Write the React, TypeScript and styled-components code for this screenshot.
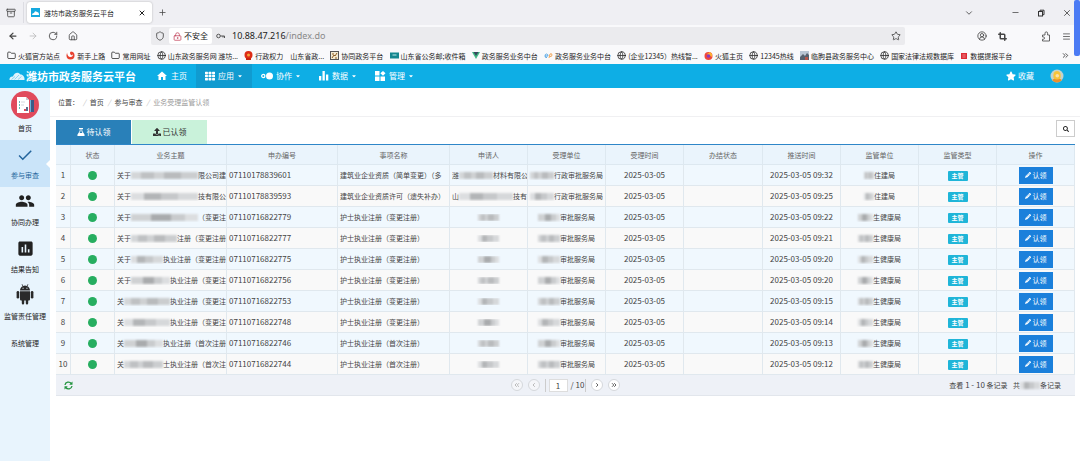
import React from 'react';
import styled, { createGlobalStyle, css } from 'styled-components';
import {
  ArrowLeft, ArrowRight, RotateCw, House, Shield, LockKeyhole, Star, CircleUserRound,
  Crop, Menu, ChevronDown, ChevronsRight, Minus, X, Plus, Globe, Folder, Archive,
} from 'lucide-react';
import { FaTh, FaStar, FaUpload, FaSearch, FaPencilAlt, FaCaretDown } from 'react-icons/fa';
import { MdGroup, MdAssessment, MdCheck, MdHome } from 'react-icons/md';

const Global = createGlobalStyle`
  * { box-sizing: border-box; }
  html, body { margin: 0; }
  body {
    font: 7px/10px "Noto Sans CJK SC", "Noto Sans", sans-serif;
    color: #444;
    background: #fff;
  }
  button, input { font: inherit; color: inherit; margin: 0; padding: 0; }
  button { border: 0; background: none; display: inline-flex; align-items: center; justify-content: center; }
  a { color: inherit; text-decoration: none; }
  svg { display: block; flex: none; }
`;

const Page = styled.div`
  position: relative;
  display: flex;
  flex-direction: column;
  min-height: 100vh;
`;

/* Browser frame */
const TabStrip = styled.div`
  display: flex;
  align-items: center;
  height: 25px;
  padding: 0 8px 0 6px;
  background: #efeff3;
  color: #444;
`;
const Divider = styled.span`
  width: 1px;
  height: 21px;
  margin: 0 3px 0 7px;
  background: #dcdce2;
`;
const BrowserTab = styled.div`
  display: flex;
  align-items: center;
  gap: 4px;
  width: 125px;
  height: 21px;
  padding: 0 6px 0 4px;
  border-radius: 3px;
  background: #fff;
  box-shadow: 0 0 2px #aaa;
  color: #222;
  button { margin-left: auto; }
`;
const NewTab = styled.button`
  margin-left: 6px;
`;
const WindowButtons = styled.div`
  display: flex;
  align-items: center;
  margin-left: auto;
  gap: 17px;
  button:first-child { margin-right: 20px; }
`;
const AddressRow = styled.div`
  display: flex;
  align-items: center;
  height: 22px;
  padding: 0 9px 0 8px;
  gap: 10px;
  background: #f9f9fb;
  color: #444;
`;
const AddressField = styled.div`
  display: flex;
  align-items: center;
  gap: 4px;
  flex: 1;
  height: 18px;
  margin: 0 62px 0 63px;
  padding: 0 4px;
  border-radius: 2px;
  background: #ebebee;
`;
const Insecure = styled.span`
  display: flex;
  align-items: center;
  gap: 2px;
  height: 16px;
  padding: 0 4px;
  border-radius: 2px;
  background: #fff;
  font-size: 8px;
  color: #222;
`;
const Address = styled.input`
  flex: 1;
  min-width: 0;
  border: 0;
  background: transparent;
`;
const AddressText = styled.label`
  display: flex;
  flex: 1;
  margin-left: 3px;
  font: 9px/12px "Noto Sans", sans-serif;
  color: #222;
  span { color: #888; }
`;
const AddressTools = styled.div`
  display: flex;
  align-items: center;
  gap: 11px;
  button:nth-child(3) { margin-left: 23px; }
`;
const Bookmarks = styled.nav`
  display: flex;
  align-items: center;
  justify-content: space-between;
  height: 17px;
  padding: 0 10px 0 7px;
  background: #f9f9fb;
  color: #222;
  white-space: nowrap;
`;
const Bookmark = styled.a`
  display: flex;
  align-items: center;
  gap: 2px;
`;
const BookmarkSpace = styled.span`
  width: 36px;
`;
const ScrollThumb = styled.div`
  position: absolute;
  top: 0;
  right: 0;
  width: 6px;
  height: 56px;
  border-radius: 2px;
  background: #4b7bf4;
`;

/* Application header */
const Header = styled.header`
  display: flex;
  align-items: stretch;
  height: 24px;
  padding: 0 16px 0 9px;
  background: #0eaee5;
  color: #fff;
`;
const Brand = styled.h1`
  display: flex;
  align-items: center;
  gap: 1px;
  width: 138px;
  margin: 0;
  font-size: 11px;
  font-weight: 700;
  line-height: 16px;
  white-space: nowrap;
`;
const NavButton = styled.button<{ $active?: boolean }>`
  gap: 3px;
  padding: 0 9px;
  font-size: 8px;
  background: ${(p) => (p.$active ? '#109bd0' : 'transparent')};
`;
const HeaderRight = styled.div`
  display: flex;
  align-items: center;
  gap: 16px;
  margin-left: auto;
  button { gap: 2px; font-size: 8px; }
`;

/* Body */
const Body = styled.div`
  display: flex;
  flex: 1;
`;
const Sidebar = styled.nav`
  flex: none;
  width: 50px;
  background: #e8f4fd;
  color: #222;
`;
const SideItem = styled.a<{ $active?: boolean; $plain?: boolean }>`
  position: relative;
  display: flex;
  flex-direction: column;
  align-items: center;
  justify-content: flex-end;
  gap: 6px;
  height: 47px;
  padding-bottom: 7px;
  white-space: nowrap;
  ${(p) => p.$plain && css`height: 27px;`}
  ${(p) => p.$active && css`
    background: #cae4f9;
    color: #23649c;
    &::after {
      content: '';
      position: absolute;
      top: 20px;
      right: 0;
      border: 4px solid transparent;
      border-left: 0;
      border-right-color: #fff;
    }
  `}
`;
const SideHome = styled(SideItem)`
  height: 52px;
  gap: 4px;
`;
const Main = styled.main`
  flex: 1;
  min-width: 0;
`;
const Crumbs = styled.div`
  display: flex;
  align-items: center;
  gap: 4px;
  height: 28px;
  padding-left: 8px;
  i { color: #bbb; }
  span { color: #999; }
`;
const Content = styled.section`
  padding: 3px 5px 0 6px;
  border-top: 1px solid #f0f0f2;
`;
const TabRow = styled.div`
  display: flex;
  align-items: flex-start;
  gap: 1px;
`;
const ListTab = styled.button<{ $active?: boolean }>`
  width: 75px;
  height: 24px;
  gap: 2px;
  font-size: 8px;
  background: ${(p) => (p.$active ? '#2980b9' : '#c9f2da')};
  color: ${(p) => (p.$active ? '#fff' : '#333')};
`;
const SearchButton = styled.button`
  width: 19px;
  height: 17px;
  margin-left: auto;
  border: 1px solid #ccc;
  color: #222;
`;

const Grid = styled.table`
  width: 100%;
  table-layout: fixed;
  border-collapse: separate;
  border-spacing: 0;
  border-top: 1px solid #2e86c8;
  white-space: nowrap;
  text-align: center;
  tbody tr:nth-child(odd) { background: #f0f8fe; }
  tbody tr:nth-child(even) { background: #f9f9f9; }
`;
const Th = styled.th`
  height: 20px;
  padding: 0;
  background: #eaf4fc;
  border: solid #dde8f0;
  border-width: 0 1px 1px 0;
  font-weight: 400;
  color: #666;
`;
const Td = styled.td<{ $left?: boolean; $num?: boolean }>`
  height: 21px;
  padding: 0 0 0 ${(p) => (p.$left ? 2 : 0)}px;
  border: solid #e0e8ee;
  border-width: 0 1px 1px 0;
  overflow: hidden;
  text-align: ${(p) => (p.$left ? 'left' : 'center')};
  font-size: ${(p) => (p.$num ? 8 : 7)}px;
`;
const Line = styled.div<{ $center?: boolean }>`
  display: flex;
  align-items: center;
  justify-content: ${(p) => (p.$center ? 'center' : 'flex-start')};
  overflow: hidden;
`;
const tones = [
  'linear-gradient(90deg,#d4d6d8 0 15%,#bfc1c3 15% 35%,#cfd1d3 35% 50%,#b9bbbd 50% 75%,#cbcdcf 75%)',
  'linear-gradient(90deg,#dcdee0 0 20%,#b3b5b7 20% 45%,#c6c8ca 45% 70%,#d6d8da 70%)',
  'linear-gradient(90deg,#cfd1d3 0 30%,#a9abad 30% 60%,#c9cbcd 60% 80%,#dcdee0 80%)',
];
const Mosaic = styled.span<{ $w?: number; $tone?: number }>`
  flex: ${(p) => (p.$w ? 'none' : '1')};
  width: ${(p) => (p.$w ? `${p.$w}px` : 'auto')};
  height: 7px;
  background: ${(p) => tones[(p.$tone ?? 0) % 3]};
  filter: blur(1px);
`;
const Dot = styled.span`
  display: inline-block;
  width: 9px;
  height: 9px;
  border-radius: 50%;
  background: #27ae60;
  vertical-align: middle;
`;
const Badge = styled.span`
  display: inline-block;
  width: 20px;
  border-radius: 1px;
  background: #1fb5d8;
  color: #fff;
  font-size: 6px;
  font-weight: 700;
  vertical-align: middle;
`;
const ClaimButton = styled.button`
  gap: 2px;
  width: 34px;
  height: 17px;
  background: #1b80db;
  color: #fff;
  vertical-align: middle;
`;
const Pager = styled.footer`
  display: grid;
  grid-template-columns: 1fr auto 1fr;
  align-items: center;
  height: 21px;
  background: #eef1f7;
  border-bottom: 1px solid #e2e6ec;
`;
const ReloadButton = styled.button`
  justify-self: start;
  padding-left: 8px;
`;
const Pages = styled.div`
  display: flex;
  align-items: center;
  gap: 5px;
  font-size: 8px;
`;
const Round = styled.button`
  width: 12px;
  height: 12px;
  border: 1px solid #d5d8dc;
  border-radius: 50%;
  background: #fff;
  color: #666;
  &:disabled { color: #bbb; background: #f5f6f9; }
`;
const PageInput = styled.label`
  display: flex;
  align-items: center;
  gap: 3px;
  padding: 0 1px 0 3px;
  border: solid #ccc;
  border-width: 0 1px;
  input { width: 19px; height: 13px; border: 1px solid #ddd; background: #fff; text-align: center; }
`;
const Records = styled.div`
  display: flex;
  align-items: center;
  justify-content: flex-end;
  padding-right: 14px;
  white-space: pre;
`;
const Range = styled.span`
  font-size: 8px;
`;

const CloudLogo = ({ w = 16 }: { w?: number }) => (
  <svg width={w} height={w * 0.625} viewBox="0 0 16 10">
    <path d="M.5 9C0 7 2 5 4 5.500C5 2 9 0 11.500 3.500C14 3.500 16 6 15.500 9Z" fill="#dff3fc" />
    <path d="M2.500 8.500L6 5.500M5.500 8.500L10 4M9 8.500L12.500 5.500" stroke="#8fd3ef" fill="none" />
  </svg>
);
const Square = ({ fill, children }: { fill: string; children?: React.ReactNode }) => (
  <svg width="9" height="9" viewBox="0 0 9 9"><rect width="9" height="9" fill={fill} />{children}</svg>
);
const RestoreIcon = () => (
  <svg width="8" height="8" viewBox="0 0 8 8" fill="none" stroke="#333">
    <rect x="1.500" y="2.500" width="4" height="4.500" /><path d="M3 2.500V1.200h4v4.500H5.500" />
  </svg>
);
const KeyIcon = () => (
  <svg width="9" height="8" viewBox="0 0 9 8" fill="none" stroke="#555">
    <circle cx="2.500" cy="4" r="1.800" /><path d="M4.300 4H8.500V6M7 4V5.500" />
  </svg>
);
const PuzzleIcon = () => (
  <svg width="10" height="11" viewBox="0 0 10 11" fill="none" stroke="#555" strokeWidth=".9" strokeLinejoin="round">
    <path d="M1.500 4H4V2.200a1.200 1.200 0 0 1 2.600 0V4H8.500V10H1.500V8.300H2.300a1.200 1.200 0 0 0 0-2.400H1.500Z" />
  </svg>
);
const FlaskIcon = () => (
  <svg width="8" height="8" viewBox="0 0 8 8" fill="#fff">
    <path d="M2 0H6V1H5.300V3L7.600 6.800Q8 8 7 8H1Q0 8 .4 6.800L2.700 3V1H2ZM3.500 1V3.200L2.500 5H5.500L4.500 3.200V1Z" fillRule="evenodd" />
  </svg>
);
const SwirlIcon = () => (
  <svg width="9" height="9" viewBox="0 0 9 9">
    <circle cx="4.500" cy="4.500" r="4" fill="#e8412e" />
    <path d="M1 0H5Q3 2 5 4Q6 5 7 3Q7 6 4.500 6Q1 6 1 0" fill="#fff" />
  </svg>
);
const EmblemIcon = () => (
  <svg width="9" height="9" viewBox="0 0 9 9">
    <circle cx="4.500" cy="4" r="4" fill="#dd2c16" /><path d="M2 7h5v2H2z" fill="#c8230f" />
    <circle cx="4.500" cy="4" r="1.500" fill="#f7a33c" />
  </svg>
);
const SketchIcon = () => (
  <svg width="9" height="9" viewBox="0 0 9 9">
    <rect x=".5" y=".5" width="8" height="8" fill="#f4ead0" stroke="#555" />
    <path d="M2 7L4 4L5 5L7 2M2 3h2M5 7h2" stroke="#8a5a20" fill="none" />
  </svg>
);
const MailIcon = () => (
  <svg width="9" height="9" viewBox="0 0 9 9"><path d="M0 1.500h9v6H0z" fill="#16878f" /><path d="M2.500 4h4" stroke="#bfe8ea" /></svg>
);
const VueIcon = () => (
  <svg width="8" height="9" viewBox="0 0 8 9"><path d="M0 1h8L4 8Z" fill="#41b883" /><path d="M1.500 1h5L4 5Z" fill="#35495e" /></svg>
);
const WaveIcon = () => (
  <svg width="9" height="9" viewBox="0 0 9 9">
    <path d="M1 5h3q0-2-1.500-2T1 5q0 2 2 1.500" stroke="#5aa9e6" fill="none" />
    <path d="M5 7l1-4q2-1 2 1q0 2-2.500 1.500" stroke="#f2a65a" fill="none" />
  </svg>
);
const FoxIcon = () => (
  <svg width="9" height="9" viewBox="0 0 9 9">
    <circle cx="4.500" cy="5" r="4" fill="#f0463c" /><path d="M1 2l2 1 3-2 2 2v3Z" fill="#ffb02e" /><circle cx="4.500" cy="5" r="1.800" fill="#8a3bc0" />
  </svg>
);
const PhotoIcon = () => (
  <Square fill="#b9c6d4"><path d="M0 9V6l3-3 2 2 2-3 2 2v5Z" fill="#56616e" /><path d="M5 6h3v3H5z" fill="#b5554a" /></Square>
);
const RedIcon = () => (
  <svg width="8" height="8" viewBox="0 0 8 8"><rect x="1" y="1" width="6" height="6" fill="#dd2b35" /><path d="M2 3h4M2 5h4M4 2v4" stroke="#f08a8a" strokeWidth=".6" /></svg>
);
const TogetherIcon = () => (
  <svg width="12" height="8" viewBox="0 0 12 8"><circle cx="2.300" cy="4" r="1.600" fill="none" stroke="#fff" strokeWidth="1.300" /><circle cx="8.500" cy="4" r="3.500" fill="#fff" /></svg>
);
const BarsIcon = () => (
  <svg width="10" height="10" viewBox="0 0 10 10" fill="#fff"><path d="M0 5h2.300v4.500H0zM3.500 0h2.300v9.500H3.500zM7 3.500h2.300v6H7z" /></svg>
);
const WidgetsIcon = () => (
  <svg width="11" height="10" viewBox="0 0 11 10" fill="#fff"><path d="M0 0h4.500v4.500H0zM0 5.500h4.500V10H0zM5.500 5.500H10V10H5.500zM8 0l2.500 2.300L8 4.700L5.300 2.300z" /></svg>
);
const HomeBadge = () => (
  <svg width="28" height="28" viewBox="0 0 28 28">
    <circle cx="14" cy="14" r="14" fill="#e04a5c" />
    <path d="M6 6h9l3 3v13H6z" fill="#fff" /><path d="M15 6v3h3z" fill="#c9ccd4" />
    <path d="M8 11h1M8 14h1M8 17h1" stroke="#35a79c" strokeWidth="1.500" />
    <path d="M10 11h4M10 14h3" stroke="#d5d8dd" />
    <path d="M13 18h2v2h-2z" fill="#e04a5c" /><path d="M15 16h2v4h-2z" fill="#59708e" />
    <path d="M19 9h4v12h-4z" fill="#3c5c88" /><path d="M19 9h1v12h-1z" fill="#6fb5d8" />
  </svg>
);
const RobotIcon = () => (
  <svg width="18" height="21" viewBox="0 0 18 21" fill="#2a2a2a">
    <path d="M4 6.500C4 4 5.500 2.700 6.700 2.200L5.600.4L6.100.1L7.300 1.900Q9 1.300 10.700 1.900L11.900.1L12.400.4L11.300 2.200C12.500 2.700 14 4 14 6.500ZM6.500 4.700h1.100V3.700H6.500ZM10.400 4.700h1.100V3.700h-1.100Z" fillRule="evenodd" />
    <path d="M4 7.200H14V15.500Q14 16.600 12.900 16.600H12.200V19.300Q12.200 20.600 11 20.600T9.800 19.300V16.600H8.200V19.300Q8.200 20.600 7 20.600T5.800 19.300V16.600H5.100Q4 16.600 4 15.500Z" />
    <rect x=".6" y="7" width="2.600" height="7.500" rx="1.300" /><rect x="14.800" y="7" width="2.600" height="7.500" rx="1.300" />
  </svg>
);
const RefreshIcon = () => (
  <svg width="9" height="9" viewBox="0 0 9 9" fill="none" stroke="#259440" strokeWidth="1.300">
    <path d="M1 4C1.500 .8 5.500 .2 7.300 2.500M8 5C7.500 8.200 3.500 8.800 1.700 6.500" />
    <path d="M8.500 .5V3.800H5.200zM.5 8.500V5.200H3.800z" fill="#259440" stroke="none" />
  </svg>
);
const Chevrons = ({ double, back }: { double?: boolean; back?: boolean }) => (
  <svg width="6" height="6" viewBox="0 0 6 6" fill="none" stroke="currentColor">
    <g transform={back ? 'matrix(-1 0 0 1 6 0)' : undefined}>
      <path d={double ? 'M1 1.200L2.800 3L1 4.800M3.200 1.200L5 3L3.200 4.800' : 'M2.200 1.200L4 3L2.200 4.800'} />
    </g>
  </svg>
);
const Avatar = () => (
  <svg width="14" height="14" viewBox="0 0 14 14">
    <circle cx="7" cy="7" r="6.500" fill="#c3d3cc" /><path d="M2 11Q7 7 12 11Q7 16 2 11" fill="#e98f2b" />
    <path d="M3.500 9Q2.500 2 7 2T10.500 9Q7 12 3.500 9" fill="#f7c437" /><circle cx="7.300" cy="6.800" r="1.800" fill="#fbe0a6" />
  </svg>
);

const folder = <Folder size={9} strokeWidth={2} />;
const globe = <Globe size={9} strokeWidth={2} />;
const bookmarks: [React.ReactNode, string][] = [
  [folder, '火狐官方站点'], [<SwirlIcon />, '新手上路'], [folder, '常用网址'],
  [globe, '山东政务服务网 潍坊...'], [<EmblemIcon />, '行政权力　山东省政...'], [<SketchIcon />, '协同政务平台'],
  [<MailIcon />, '山东省公务邮;收件箱'], [<VueIcon />, '政务服务业务中台'], [<WaveIcon />, '政务服务业务中台'],
  [globe, '(企业12345）热线智...'], [<FoxIcon />, '火狐主页'], [globe, '12345热线'],
  [<PhotoIcon />, '临朐县政务服务中心'], [globe, '国家法律法规数据库'], [<RedIcon />, '数据提报平台'],
];

const widths = [15, 44, 112, 111, 112, 78, 78, 78, 79, 78, 78, 78, 78];
const heads = ['', '状态', '业务主题', '申办编号', '事项名称', '申请人', '受理单位', '受理时间', '办结状态', '推送时间', '监管单位', '监管类型', '操作'];

type Row = { lead: string; tail: string; no: string; item: string; time: string; applicant?: [string, number, string] };
const change = '护士执业注册（变更注册）';
const first = '护士执业注册（首次注册）';
const rows: Row[] = [
  { lead: '关于', tail: '限公司建', no: '07110178839601', item: '建筑业企业资质（简单变更）（多', time: '09:32', applicant: ['潍', 34, '材料有限公'] },
  { lead: '关于', tail: '技有限公', no: '07110178839593', item: '建筑业企业资质许可（遗失补办）', time: '09:25', applicant: ['山', 54, '技有'] },
  { lead: '关于', tail: '（变更注', no: '07110716822779', item: change, time: '09:22' },
  { lead: '关于', tail: '注册（变更注册', no: '07110716822777', item: change, time: '09:21' },
  { lead: '关于', tail: '执业注册（变更注册', no: '07110716822775', item: change, time: '09:20' },
  { lead: '关于', tail: '执业注册（变更注', no: '07110716822756', item: change, time: '09:20' },
  { lead: '关', tail: '执业注册（变更注', no: '07110716822753', item: change, time: '09:15' },
  { lead: '关', tail: '执业注册（变更注', no: '07110716822748', item: change, time: '09:14' },
  { lead: '关', tail: '执业注册（首次注册', no: '07110716822746', item: first, time: '09:13' },
  { lead: '关', tail: '士执业注册（首次注', no: '07110716822744', item: first, time: '09:12' },
];

const GridRow = ({ row, index }: { row: Row; index: number }) => {
  const firm = Boolean(row.applicant);
  return (
    <tr>
      <Td $num>{index + 1}</Td>
      <Td><Dot /></Td>
      <Td $left><Line>{row.lead}<Mosaic $tone={index} />{row.tail}</Line></Td>
      <Td $left $num>{row.no}</Td>
      <Td $left>{row.item}</Td>
      {row.applicant ? (
        <Td $left><Line>{row.applicant[0]}<Mosaic $w={row.applicant[1]} $tone={index} />{row.applicant[2]}</Line></Td>
      ) : (
        <Td><Line $center><Mosaic $w={21} $tone={index + 1} /></Line></Td>
      )}
      <Td><Line $center><Mosaic $w={firm ? 24 : 22} $tone={index} />{firm ? '行政审批服务局' : '审批服务局'}</Line></Td>
      <Td $num>2025-03-05</Td>
      <Td />
      <Td $num>2025-03-05 {row.time}</Td>
      <Td><Line $center><Mosaic $w={firm ? 10 : 15} $tone={index} />{firm ? '住建局' : '生健康局'}</Line></Td>
      <Td><Badge>主管</Badge></Td>
      <Td><ClaimButton><FaPencilAlt size={6} />认领</ClaimButton></Td>
    </tr>
  );
};

export default function App() {
  return (
    <Page>
      <Global />
      <TabStrip>
        <button aria-label="标签概览"><Archive size={10} strokeWidth={2} /></button>
        <Divider />
        <BrowserTab>
          <Square fill="#16a9df"><path d="M1 7q0-2 2-2q1-3 3-1q2 0 2 3z" fill="#fff" /></Square>
          潍坊市政务服务云平台
          <button aria-label="关闭标签"><X size={8} strokeWidth={3} /></button>
        </BrowserTab>
        <NewTab aria-label="新标签"><Plus size={9} /></NewTab>
        <WindowButtons>
          <button aria-label="标签列表"><ChevronDown size={10} /></button>
          <button aria-label="最小化"><Minus size={9} /></button>
          <button aria-label="还原"><RestoreIcon /></button>
          <button aria-label="关闭"><X size={10} /></button>
        </WindowButtons>
      </TabStrip>
      <AddressRow>
        <button aria-label="后退"><ArrowLeft size={10} strokeWidth={3} /></button>
        <button aria-label="前进"><ArrowRight size={10} color="#bbb" /></button>
        <button aria-label="刷新"><RotateCw size={10} /></button>
        <button aria-label="主页"><House size={10} /></button>
        <AddressField>
          <Shield size={10} />
          <Insecure><LockKeyhole size={9} color="#c2415a" />不安全</Insecure>
          <KeyIcon />
          <AddressText>10.88.47.216<span>/index.do</span><Address aria-label="地址" /></AddressText>
          <Star size={10} />
        </AddressField>
        <AddressTools>
          <button aria-label="账户"><CircleUserRound size={10} strokeWidth={2} /></button>
          <button aria-label="截图"><Crop size={9} strokeWidth={4} /></button>
          <button aria-label="扩展"><PuzzleIcon /></button>
          <button aria-label="菜单"><Menu size={9} /></button>
        </AddressTools>
      </AddressRow>
      <Bookmarks>
        {bookmarks.map(([icon, text], i) => (
          <Bookmark href="#" key={i}>{icon}{text}</Bookmark>
        ))}
        <BookmarkSpace />
        <ChevronsRight size={9} />
      </Bookmarks>
      <ScrollThumb />
      <Header>
        <Brand><CloudLogo />潍坊市政务服务云平台</Brand>
        <NavButton><MdHome size={12} />主页</NavButton>
        <NavButton $active><FaTh size={10} />应用<FaCaretDown size={6} /></NavButton>
        <NavButton><TogetherIcon />协作<FaCaretDown size={6} /></NavButton>
        <NavButton><BarsIcon />数据<FaCaretDown size={6} /></NavButton>
        <NavButton><WidgetsIcon />管理<FaCaretDown size={6} /></NavButton>
        <HeaderRight>
          <button><FaStar size={10} />收藏</button>
          <button aria-label="用户"><Avatar /></button>
        </HeaderRight>
      </Header>
      <Body>
        <Sidebar>
          <SideHome href="#"><HomeBadge />首页</SideHome>
          <SideItem href="#" $active><MdCheck size={18} />参与审查</SideItem>
          <SideItem href="#"><MdGroup size={20} />协同办理</SideItem>
          <SideItem href="#"><MdAssessment size={19} />结果告知</SideItem>
          <SideItem href="#"><RobotIcon />监管责任管理</SideItem>
          <SideItem href="#" $plain>系统管理</SideItem>
        </Sidebar>
        <Main>
          <Crumbs>
            位置：<i>/</i><a href="#">首页</a><i>/</i><a href="#">参与审查</a><i>/</i><span>业务受理监管认领</span>
          </Crumbs>
          <Content>
            <TabRow>
              <ListTab $active><FlaskIcon />待认领</ListTab>
              <ListTab><FaUpload size={8} />已认领</ListTab>
              <SearchButton aria-label="搜索"><FaSearch size={6} /></SearchButton>
            </TabRow>
            <Grid>
              <colgroup>{widths.map((w, i) => <col key={i} width={w} />)}</colgroup>
              <thead><tr>{heads.map((h, i) => <Th key={i}>{h}</Th>)}</tr></thead>
              <tbody>{rows.map((row, i) => <GridRow key={i} row={row} index={i} />)}</tbody>
            </Grid>
            <Pager>
              <ReloadButton aria-label="刷新列表"><RefreshIcon /></ReloadButton>
              <Pages>
                <Round disabled aria-label="首页"><Chevrons double back /></Round>
                <Round disabled aria-label="上一页"><Chevrons back /></Round>
                <PageInput><input defaultValue="1" aria-label="页码" />/ 10</PageInput>
                <Round aria-label="下一页"><Chevrons /></Round>
                <Round aria-label="末页"><Chevrons double /></Round>
              </Pages>
              <Records>查看<Range> 1 - 10 </Range>条记录<Range>   </Range>共<Mosaic $w={20} $tone={1} />条记录</Records>
            </Pager>
          </Content>
        </Main>
      </Body>
    </Page>
  );
}
